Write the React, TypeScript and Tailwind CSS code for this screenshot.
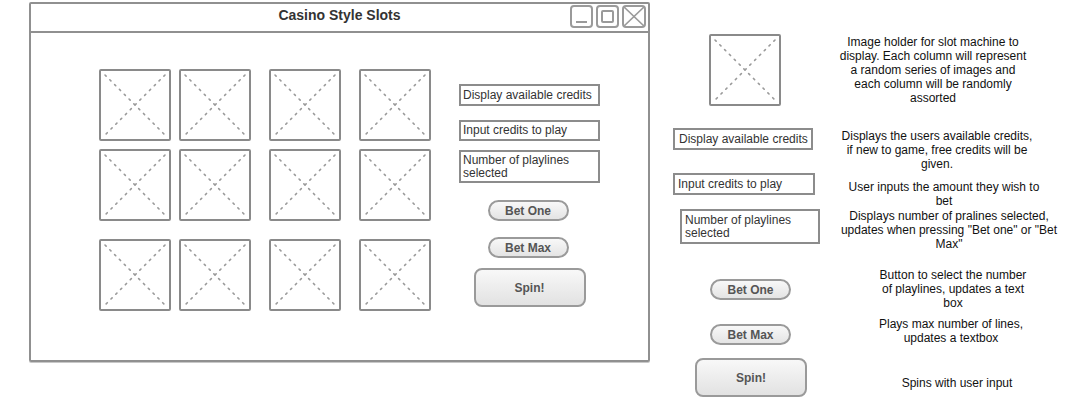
const REEL_COL_GAP = ["", "ml-[8px]", "ml-[18px]", "ml-[18px]"];
const REEL_ROW_GAP = ["", "mt-[8px]", "mt-[18px]"];

function Placeholder() {
  return (
    <div className="w-[72px] h-[72px] shrink-0 border-2 border-[#8a8a8a] rounded-[2px] bg-white">
      <svg width="68" height="68" viewBox="0 0 68 68" className="block">
        <line x1="4" y1="4" x2="64" y2="64" stroke="#9a9a9a" strokeWidth="1.6" strokeDasharray="1.6 5.2" strokeLinecap="round" />
        <line x1="64" y1="4" x2="4" y2="64" stroke="#9a9a9a" strokeWidth="1.6" strokeDasharray="1.6 5.2" strokeLinecap="round" />
      </svg>
    </div>
  );
}

function TextBox({ className, children }: { className: string; children: React.ReactNode }) {
  return (
    <div
      className={`border-2 border-[#8c8c8c] bg-white pl-[2px] text-[12px] leading-[13px] text-[#333] flex items-center whitespace-nowrap ${className}`}
    >
      <span>{children}</span>
    </div>
  );
}

function PillButton({ label, className }: { label: string; className: string }) {
  return (
    <div
      className={`w-[81px] h-[21px] rounded-full border-2 border-[#9a9a9a] bg-gradient-to-b from-[#f8f8f8] to-[#e4e4e4] flex items-center justify-center text-[12px] font-bold text-[#555] ${className}`}
    >
      {label}
    </div>
  );
}

function SpinButton({ className }: { className: string }) {
  return (
    <div
      className={`w-[112px] h-[39px] rounded-[8px] border-2 border-[#9a9a9a] bg-gradient-to-b from-[#f8f8f8] to-[#e2e2e2] flex items-center justify-center text-[12px] font-bold text-[#555] ${className}`}
    >
      Spin!
    </div>
  );
}

function WindowControls() {
  return (
    <div className="flex items-start justify-end gap-[3px] pt-[1px] pr-[2px]">
      <div className="w-[23px] h-[23px] border-2 border-[#9a9a9a] rounded-[4px] flex items-end justify-center pb-[3px]">
        <div className="w-[11px] h-[2px] bg-[#9a9a9a]" />
      </div>
      <div className="w-[23px] h-[23px] border-2 border-[#9a9a9a] rounded-[4px] flex items-center justify-center">
        <div className="w-[13px] h-[13px] border-2 border-[#9a9a9a] rounded-[2px]" />
      </div>
      <div className="w-[24px] h-[23px] border-2 border-[#9a9a9a] rounded-[4px]">
        <svg width="20" height="19" viewBox="0 0 20 19" className="block">
          <line x1="0" y1="0" x2="20" y2="19" stroke="#9a9a9a" strokeWidth="1.6" />
          <line x1="20" y1="0" x2="0" y2="19" stroke="#9a9a9a" strokeWidth="1.6" />
        </svg>
      </div>
    </div>
  );
}

function SlotWindow() {
  return (
    <div className="ml-[29px] mt-[2px] w-[621px] h-[360px] shrink-0 border-2 border-[#909090] rounded-[2px] flex flex-col shadow-[0_1px_0_#c8c8c8]">
      <div className="h-[29px] border-b-2 border-[#909090] grid grid-cols-[1fr_auto_1fr]">
        <div />
        <div className="pt-[2px] text-[14px] font-bold text-[#333] leading-[18px]">Casino Style Slots</div>
        <WindowControls />
      </div>

      <div className="flex pl-[68px] pt-[36px]">
        <div className="flex flex-col">
          {REEL_ROW_GAP.map((rowGap, r) => (
            <div key={r} className={`flex ${rowGap}`}>
              {REEL_COL_GAP.map((colGap, c) => (
                <div key={c} className={colGap}>
                  <Placeholder />
                </div>
              ))}
            </div>
          ))}
        </div>

        <div className="ml-[28px] mt-[15px] w-[141px] flex flex-col items-center">
          <TextBox className="w-[141px] h-[22px]">Display available credits</TextBox>
          <TextBox className="w-[141px] h-[21px] mt-[14px]">Input credits to play</TextBox>
          <TextBox className="w-[141px] h-[33px] mt-[9px]">
            Number of playlines
            <br />
            selected
          </TextBox>
          <PillButton label="Bet One" className="mt-[17px] mr-[3px]" />
          <PillButton label="Bet Max" className="mt-[16px] mr-[3px]" />
          <SpinButton className="mt-[10px]" />
        </div>
      </div>
    </div>
  );
}

const NOTES = [
  {
    lines: ["Image holder for slot machine to", "display. Each column will represent", "a random series of images and", "each column will be randomly", "assorted"],
    className: "mt-[35px] pr-[34px]",
  },
  {
    lines: ["Displays the users available credits,", "if new to game, free credits will be", "given."],
    className: "mt-[24px] pr-[26px]",
  },
  {
    lines: ["User inputs the amount they wish to", "bet"],
    className: "mt-[9px] pr-[12px]",
  },
  {
    lines: ["Displays number of pralines selected,", "updates when pressing \"Bet one\" or \"Bet", "Max\""],
    className: "mt-[1px] pr-[2px]",
  },
  {
    lines: ["Button to select the number", "of playlines, updates a text", "box"],
    className: "mt-[17px] pl-[6px]",
  },
  {
    lines: ["Plays max number of lines,", "updates a textbox"],
    className: "mt-[7px] pl-[2px]",
  },
  {
    lines: ["Spins with user input"],
    className: "mt-[31px] pl-[14px]",
  },
];

export default function App() {
  return (
    <div className="w-[1079px] h-[416px] overflow-hidden bg-white flex font-['Liberation_Sans',Arial,sans-serif]">
      <SlotWindow />

      <div className="ml-[23px] w-[148px] shrink-0 flex flex-col items-start">
        <div className="mt-[34px] ml-[36px]">
          <Placeholder />
        </div>
        <TextBox className="w-[140px] h-[22px] mt-[22px] pl-[4px]">Display available credits</TextBox>
        <TextBox className="w-[142px] h-[22px] mt-[23px] pl-[3px]">Input credits to play</TextBox>
        <TextBox className="w-[140px] h-[35px] mt-[14px] ml-[7px] pl-[3px]">
          Number of playlines
          <br />
          selected
        </TextBox>
        <PillButton label="Bet One" className="mt-[35px] ml-[37px]" />
        <PillButton label="Bet Max" className="mt-[24px] ml-[37px]" />
        <SpinButton className="mt-[13px] ml-[22px]" />
      </div>

      <div className="flex-1 flex flex-col text-[12px] leading-[14px] text-[#111]">
        {NOTES.map((note, i) => (
          <p key={i} className={`text-center whitespace-nowrap ${note.className}`}>
            {note.lines.map((line, j) => (
              <span key={j} className="block">
                {line}
              </span>
            ))}
          </p>
        ))}
      </div>
    </div>
  );
}
